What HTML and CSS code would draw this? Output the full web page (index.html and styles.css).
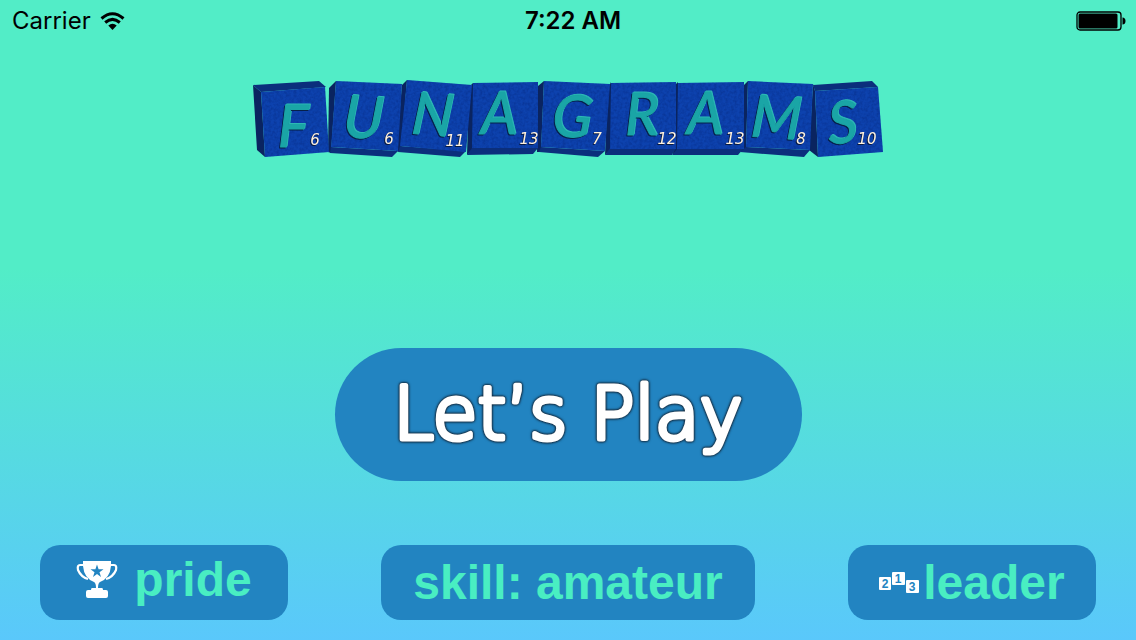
FILE: index.html
```html
<!DOCTYPE html>
<html lang="en">
<head>
<meta charset="utf-8">
<meta name="viewport" content="width=device-width, initial-scale=1">
<title>Funagrams</title>
<link rel="stylesheet" href="styles.css">
</head>
<body>
<div class="screen">
  <header class="status">
    <div class="carrier">
      <span>Carrier</span>
      <svg class="wifi" viewBox="0 0 25 19" aria-hidden="true">
        <path d="M1.500 6.500Q12.500-3 23.500 6.500M5.200 10.500Q12.500 4.200 19.800 10.500" fill="none" stroke="#000" stroke-width="3"/>
        <path d="M8.300 13.500Q12.500 10 16.700 13.500L12.500 18Z"/>
      </svg>
    </div>
    <time class="clock">7:22 AM</time>
    <svg class="battery" viewBox="0 0 50 20" aria-hidden="true">
      <rect x="1" y="1" width="44" height="18" rx="3" fill="none" stroke="#000" stroke-width="1.300"/>
      <rect x="2.500" y="2.500" width="39" height="15" rx="1.500"/>
      <path d="M46.500 6.500H47Q49.500 7 49.500 10T47 13.500H46.500Z"/>
    </svg>
  </header>

  <main class="stage">
    <h1 class="title">
      <svg class="logo" viewBox="252 80 632 78" role="img" aria-label="Funagrams">
        <defs>
          <filter id="grain" x="0" y="0" width="1" height="1" color-interpolation-filters="sRGB">
            <feTurbulence type="fractalNoise" baseFrequency="0.35" numOctaves="2" result="n"/>
            <feColorMatrix in="n" type="matrix" values="0 0 0 0 0  0 0 0 0 0.100  0 0 0 0 0.400  0 0 0 0.600 -0.220" result="g"/>
            <feComposite in="g" in2="SourceGraphic" operator="in" result="c"/>
            <feMerge><feMergeNode in="SourceGraphic"/><feMergeNode in="c"/></feMerge>
          </filter>
        </defs>
        <g class="tile-side">
          <path d="M253 85L261 92L265 157L257 150Z"/>
          <path d="M329 88L336 81L331 153L328 152Z"/>
          <path d="M402 85L407 80L401 152L396 151Z"/>
          <path d="M473 83L469 87L467 155L473 149Z"/>
          <path d="M544 81L538 86L537 152L541 152Z"/>
          <path d="M611 82L608 88L605 155L611 149Z"/>
          <path d="M678 82L676 84L673 155L679 149Z"/>
          <path d="M748 81L744 85L741 152L746 151Z"/>
          <path d="M813 84L809 150L818 157L815 91Z"/>
        </g>
        <g class="tile-edge">
          <path d="M253 85L319 81L326 87L261 92Z"/>
          <path d="M331 147L398 151L392 157L330 153Z"/>
          <path d="M400 146L466 151L460 157L398 152Z"/>
          <path d="M472 148H538L533 154L467 155Z"/>
          <path d="M541 147L605 151L598 157L539 152Z"/>
          <path d="M610 148H676L672 155H605Z"/>
          <path d="M678 148H744L738 155H672Z"/>
          <path d="M746 147L810 150L804 157L740 152Z"/>
          <path d="M813 85L872 81L878 87L815 91Z"/>
        </g>
        <g class="tile-face" filter="url(#grain)">
          <path d="M261 92L325 87L329 152L265 157Z"/>
          <path d="M336 81L402 84L398 151L331 147Z"/>
          <path d="M407 80L472 85L466 152L400 146Z"/>
          <path d="M473 83L538 82V148H472Z"/>
          <path d="M544 81L610 84L605 151L541 147Z"/>
          <path d="M611 83L676 82V149H610Z"/>
          <path d="M678 83L744 82V149H677Z"/>
          <path d="M748 81L813 84L810 150L746 147Z"/>
          <path d="M815 91L878 87L883 152L818 157Z"/>
        </g>
        <g class="tile-letter">
          <text x="293" y="147">F</text>
          <text x="362" y="138" transform="rotate(4 362 138)">U</text>
          <text x="431" y="135" transform="rotate(5 431 135)">N</text>
          <text x="499" y="134">A</text>
          <text x="571" y="137" transform="rotate(4 571 137)">G</text>
          <text x="642" y="135">R</text>
          <text x="705" y="134">A</text>
          <text x="775" y="138" transform="rotate(4 775 138)">M</text>
          <text x="844" y="143" transform="rotate(-4 844 143)">S</text>
        </g>
        <g class="tile-score">
          <text x="315" y="145">6</text>
          <text x="389" y="144">6</text>
          <text x="455" y="146">11</text>
          <text x="529" y="144">13</text>
          <text x="597" y="144">7</text>
          <text x="667" y="144">12</text>
          <text x="735" y="144">13</text>
          <text x="801" y="144">8</text>
          <text x="867" y="144">10</text>
        </g>
      </svg>
    </h1>
    <button class="play" type="button">
      <svg class="play-label" viewBox="0 0 360 100">
        <text x="180" y="74">Let’s Play</text>
      </svg>
    </button>
  </main>

  <nav class="menu" aria-label="Game options">
    <button class="option option-pride" type="button">
      <svg class="trophy" viewBox="0 0 42 38" aria-hidden="true">
        <path d="M8 4H4Q1 4 2 9Q5 16 12 18M34 4H38Q41 4 40 9Q37 16 30 18" fill="none" stroke="#fff" stroke-width="2.200"/>
        <path fill="#fff" d="M7 0H35V5Q34 17 24 21Q22 22 22 27H26Q27 27 27 29H30Q32 29 32 31V35Q32 37 30 37H12Q10 37 10 35V31Q10 29 12 29H15Q15 27 16 27H20Q20 22 18 21Q8 17 7 5Z"/>
        <path fill="#2284c1" d="M21 3.500L22.600 8.300H27.500L23.500 11.200L25 16L21 13.100L17 16L18.500 11.200L14.500 8.300H19.400Z"/>
      </svg>
      <span>pride</span>
    </button>
    <button class="option option-skill" type="button">skill: amateur</button>
    <button class="option option-leader" type="button">
      <svg class="podium" viewBox="0 0 40 22" aria-hidden="true">
        <rect x="0" y="5" width="12" height="13" rx="1"/>
        <rect x="13" y="0" width="13" height="13" rx="1"/>
        <rect x="27" y="8" width="13" height="13" rx="1"/>
        <text x="6" y="16">2</text>
        <text x="19" y="11">1</text>
        <text x="33" y="19">3</text>
      </svg>
      <span>leader</span>
    </button>
  </nav>
</div>
</body>
</html>
```
FILE: styles.css
```css
* {
  box-sizing: border-box;
}

body {
  margin: 0;
  font-family: "Liberation Sans", Arial, sans-serif;
}

.screen {
  min-height: 100vh;
  display: flex;
  flex-direction: column;
  background: linear-gradient(#52edc7 0%, #52edc7 42%, #5ac8fb 100%);
}

.status {
  display: grid;
  grid-template-columns: 1fr auto 1fr;
  align-items: center;
  height: 42px;
  padding: 0 10px 0 12px;
  font-family: Inter, Roboto, sans-serif;
  font-size: 24px;
  line-height: 42px;
  color: #000;
}

.carrier {
  display: flex;
  align-items: center;
  gap: 9px;
}

.wifi {
  width: 25px;
  height: 19px;
}

.clock {
  padding-left: 8px;
  font-weight: 600;
}

.battery {
  width: 50px;
  height: 20px;
  justify-self: end;
}

.stage {
  flex: 1;
  display: flex;
  flex-direction: column;
  align-items: center;
  justify-content: space-between;
  padding: 38px 40px 64px;
}

.title {
  margin: 0;
  font-weight: 400;
  line-height: 0;
}

.logo {
  width: 632px;
  max-width: 100%;
  overflow: visible;
}

.tile-side {
  fill: #0a2460;
}

.tile-edge {
  fill: #0b2f7c;
}

.tile-face {
  fill: #0d42ae;
}

.tile-letter {
  font-family: Lato, sans-serif;
  font-style: italic;
  font-size: 58px;
  text-anchor: middle;
  fill: #1aa5a6;
  stroke: #1aa5a6;
  stroke-width: 1px;
  stroke-linejoin: round;
  filter: drop-shadow(-1px 1px 0 #06204a) drop-shadow(1px -1px 0 #2cb8b4);
}

.tile-score {
  font-family: "DejaVu Sans", sans-serif;
  font-style: italic;
  font-size: 15px;
  text-anchor: middle;
  fill: #fff1dc;
  filter: drop-shadow(-1px 1px 0 #081a40);
}

.play {
  display: flex;
  align-items: center;
  justify-content: center;
  padding: 0 50px;
  min-width: 467px;
  height: 133px;
  border: 0;
  border-radius: 70px;
  background: #2284c1;
}

.play-label {
  width: 360px;
  height: 100px;
  overflow: visible;
  font-family: "DejaVu Sans Light", "DejaVu Sans", sans-serif;
  font-size: 73px;
  font-weight: 200;
  text-anchor: middle;
  fill: #fff;
  stroke: #fff;
  stroke-width: 5px;
  stroke-linejoin: round;
  filter: drop-shadow(0 0 1px #123) drop-shadow(0 0 1px #123);
}

.menu {
  display: flex;
  justify-content: space-between;
  align-items: flex-start;
  gap: 20px;
  padding: 0 40px 20px;
}

.option {
  display: flex;
  align-items: center;
  justify-content: center;
  height: 75px;
  padding: 0;
  border: 0;
  border-radius: 20px;
  background: #2284c1;
  color: #49eec2;
  font-family: "Liberation Sans", Arial, sans-serif;
  font-size: 48px;
  font-weight: 700;
  line-height: 56px;
}

.option-pride {
  width: 248px;
  gap: 16px;
  padding-bottom: 6px;
}

.option-skill {
  width: 374px;
}

.option-leader {
  width: 248px;
  gap: 4px;
}

.trophy {
  width: 42px;
  height: 38px;
}

.podium {
  width: 40px;
  height: 22px;
  fill: #fff;
}

.podium text {
  font-family: "Liberation Sans", Arial, sans-serif;
  font-size: 12px;
  font-weight: 700;
  text-anchor: middle;
  fill: #2284c1;
}
```
